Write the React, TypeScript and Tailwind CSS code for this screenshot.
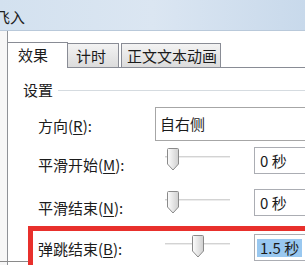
import React from 'react'

const font = { fontFamily: '"Noto Sans CJK SC", "Noto Sans", sans-serif' }

function Thumb() {
    return (
        <svg width="12" height="23" viewBox="0 0 12 23" className="absolute top-0">
            <defs>
                <linearGradient id="thumbFill" x1="0" y1="0" x2="1" y2="0">
                    <stop offset="0" stopColor="#fdfdfd" />
                    <stop offset="1" stopColor="#cfcfcf" />
                </linearGradient>
            </defs>
            <path
                d="M1.5 0.5 H10.5 Q11.5 0.5 11.5 1.5 V16 L6 22 L0.5 16 V1.5 Q0.5 0.5 1.5 0.5 Z"
                fill="url(#thumbFill)"
                stroke="#8a8a8a"
            />
        </svg>
    )
}

function Slider({ left, top }: { left: number; top: string }) {
    return (
        <div className={`relative w-[99px] h-[23px] shrink-0 ${top}`}>
            <div className="absolute left-[10px] top-[8px] w-[65px] h-[2px] bg-[#d3d3d3] border-b border-[#ececec]" />
            <div className="absolute top-0" style={{ left }}>
                <Thumb />
            </div>
        </div>
    )
}

function Label({ text, hot, pad }: { text: string; hot: string; pad: string }) {
    return (
        <div className={`w-[117px] shrink-0 text-[15px] leading-[20px] text-[#1b1b1b] ${pad}`}>
            {text}(<span className="underline underline-offset-2">{hot}</span>):
        </div>
    )
}

function TimeBox({ value, selected, top }: { value: string; selected?: boolean; top: string }) {
    return (
        <div
            className={`w-[60px] h-[27px] shrink-0 border-l border-t border-b border-[#abadb3] bg-white flex items-center pl-[2px] text-[15px] text-[#1b1b1b] ${top}`}
        >
            <span className={`px-[3px] leading-[18px] ${selected ? 'bg-[#99c8f0]' : ''}`}>{value}</span>
        </div>
    )
}

export default function App() {
    return (
        <div className="relative w-[305px] h-[265px] overflow-hidden bg-white flex flex-col" style={font}>
            {/* title bar */}
            <div className="h-[31px] shrink-0 bg-gradient-to-r from-[#d3e1ef] via-[#dbe6f2] to-[#c8d9eb] flex items-center border-b border-[#b9c9da]">
                <span className="ml-[-5px] mt-[4px] text-[15px] text-[#1e1e1e]">飞入</span>
            </div>

            <div className="flex-1 pl-[7px] bg-[#f7f7f7]">
                <div className="h-full border-l border-[#8f9297] bg-white flex flex-col">
                    {/* tabs */}
                    <div className="h-[37px] shrink-0 flex items-end bg-white">
                        <div className="w-[60px] h-[26px] border-t border-r border-[#898c95] bg-white text-[15px] text-[#1b1b1b] pl-[10px] leading-[23px]">
                            效果
                        </div>
                        <div className="w-[51px] h-[25px] border-t border-r border-b border-[#898c95] bg-gradient-to-b from-[#f3f3f3] to-[#dcdcdc] text-[15px] text-[#1b1b1b] pl-[8px] leading-[24px]">
                            计时
                        </div>
                        <div className="w-[2px] h-[25px] border-b border-[#898c95]" />
                        <div className="w-[100px] h-[25px] border-t border-l border-r border-b border-[#898c95] bg-gradient-to-b from-[#f3f3f3] to-[#dcdcdc] text-[15px] text-[#1b1b1b] pl-[5px] leading-[24px]">
                            正文文本动画
                        </div>
                        <div className="flex-1 h-[25px] border-b border-[#898c95]" />
                    </div>

                    {/* panel */}
                    <div className="flex-1 flex flex-col pt-[12px]">
                        <div className="h-[20px] flex items-center pl-[15px]">
                            <span className="text-[15px] leading-[20px] text-[#1b1b1b]">设置</span>
                            <div className="flex-1 h-px bg-[#d5dbe0] ml-[5px] mt-[1px]" />
                        </div>

                        <div className="mt-[7px] h-[34px] flex pl-[30px]">
                            <Label text="方向" hot="R" pad="pt-[9px]" />
                            <div className="w-[160px] h-[34px] shrink-0 border-l border-t border-b border-[#a6a6a6] flex items-center pl-[4px] text-[15px] text-[#1b1b1b]">
                                自右侧
                            </div>
                        </div>

                        <div className="mt-[6px] h-[27px] flex pl-[30px]">
                            <Label text="平滑开始" hot="M" pad="pt-[8px]" />
                            <Slider left={12} top="mt-[1px]" />
                            <TimeBox value="0 秒" top="mt-0" />
                        </div>

                        <div className="mt-[15px] h-[28px] flex pl-[30px]">
                            <Label text="平滑结束" hot="N" pad="pt-[9px]" />
                            <Slider left={12} top="mt-[2px]" />
                            <TimeBox value="0 秒" top="mt-0" />
                        </div>

                        <div className="mt-[9px] ml-[20px] flex-1 border-t-[5px] border-l-[5px] border-[#e8302c] flex pl-[5px]">
                            <Label text="弹跳结束" hot="B" pad="pt-[8px]" />
                            <Slider left={37} top="mt-[4px]" />
                            <TimeBox value="1.5 秒" selected top="mt-[3px]" />
                        </div>
                    </div>
                </div>
            </div>

            <div className="absolute left-0 top-[261px] w-[28px] h-px bg-[#8a8a8a]" />
        </div>
    )
}
